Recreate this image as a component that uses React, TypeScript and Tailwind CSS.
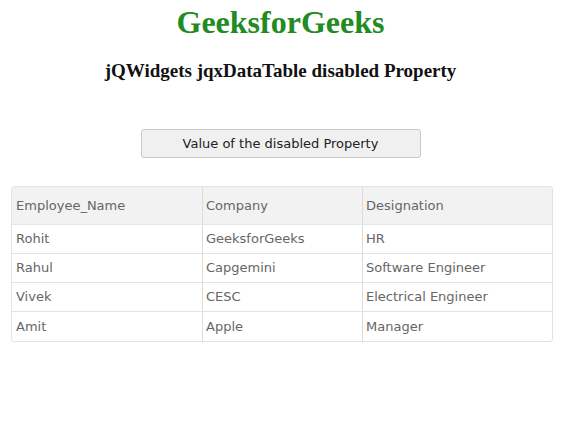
import React from 'react';

const rows = [
  { name: 'Rohit', company: 'GeeksforGeeks', designation: 'HR' },
  { name: 'Rahul', company: 'Capgemini', designation: 'Software Engineer' },
  { name: 'Vivek', company: 'CESC', designation: 'Electrical Engineer' },
  { name: 'Amit', company: 'Apple', designation: 'Manager' },
];

const App: React.FC = () => {
  return (
    <div className="min-h-screen bg-white">
      {/* Headings */}
      <div className="text-center font-['Liberation_Serif',serif] font-bold">
        <h1 className="pt-[4px] text-[32px] leading-[36px] text-[#228b22]">GeeksforGeeks</h1>
        <h3 className="mt-[20px] text-[19px] leading-[22px] text-[#111]">
          jQWidgets jqxDataTable disabled Property
        </h3>
      </div>

      {/* Button */}
      <div className="mt-[47px] flex justify-center">
        <button className="w-[280px] h-[29px] rounded-[3px] border border-[#c9c9c9] bg-[#f0f0f0] font-['DejaVu_Sans',sans-serif] text-[13px] text-[#222]">
          Value of the disabled Property
        </button>
      </div>

      {/* Table */}
      <div className="ml-[11px] mt-[28px] w-[542px] rounded-[3px] border border-[#e3e3e3] font-['DejaVu_Sans',sans-serif] text-[13px] text-[#666] overflow-hidden">
        <div className="grid grid-cols-[191px_160px_1fr] h-[38px] bg-[#f2f2f2] border-b border-[#e6e6e6]">
          <div className="flex items-center pl-[4px] border-r border-[#dcdcdc]">Employee_Name</div>
          <div className="flex items-center pl-[3px] border-r border-[#dcdcdc]">Company</div>
          <div className="flex items-center pl-[3px]">Designation</div>
        </div>
        {rows.map((row, i) => (
          <div
            key={row.name}
            className={`grid grid-cols-[191px_160px_1fr] h-[29px] ${i < rows.length - 1 ? 'border-b border-[#e3e3e3]' : ''}`}
          >
            <div className="flex items-center pl-[4px] border-r border-[#dcdcdc]">{row.name}</div>
            <div className="flex items-center pl-[3px] border-r border-[#dcdcdc]">{row.company}</div>
            <div className="flex items-center pl-[3px]">{row.designation}</div>
          </div>
        ))}
      </div>
    </div>
  );
};

export default App;
